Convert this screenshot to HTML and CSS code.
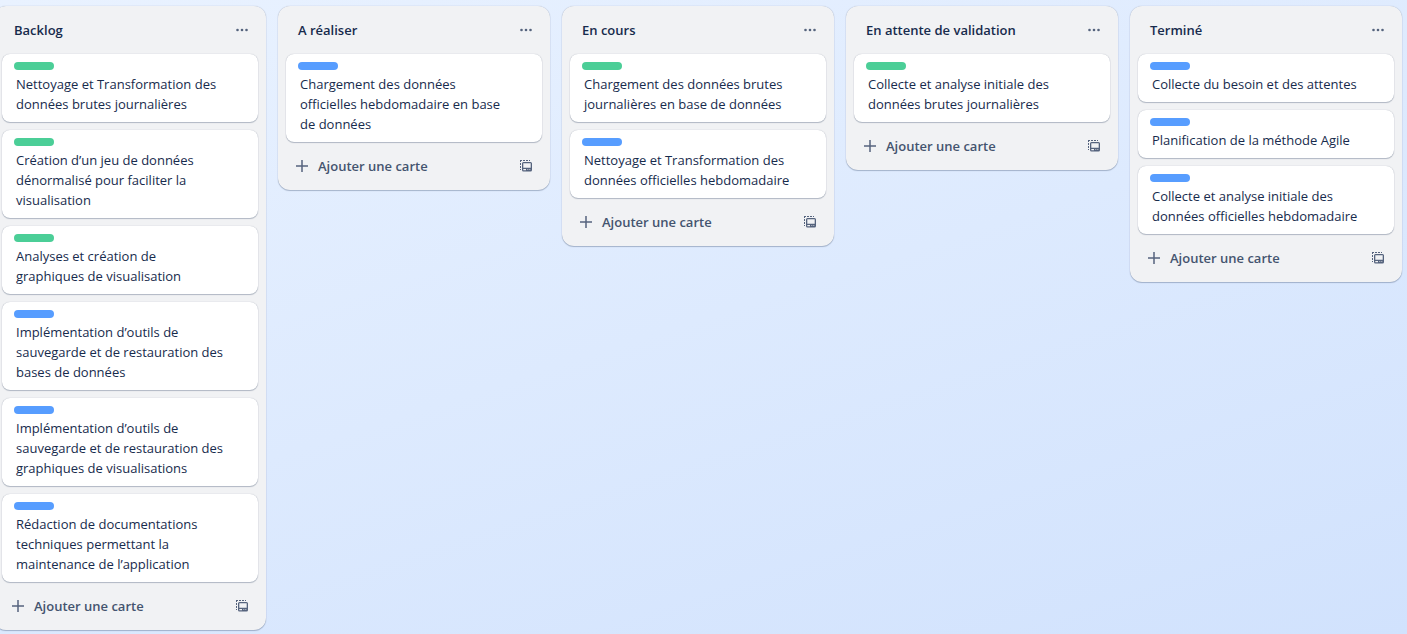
FILE: index.html
```html
<!DOCTYPE html>
<html lang="fr">
<head>
<meta charset="utf-8">
<title>Tableau</title>
<link rel="stylesheet" href="styles.css">
</head>
<body>
<svg class="sprite" aria-hidden="true">
  <symbol id="dots" viewBox="0 0 16 16"><circle cx="3.500" cy="8" r="1.300"/><circle cx="8" cy="8" r="1.300"/><circle cx="12.500" cy="8" r="1.300"/></symbol>
  <symbol id="plus" viewBox="0 0 16 16"><path d="M8 2v12M2 8h12" fill="none" stroke="currentColor" stroke-width="1.500"/></symbol>
  <symbol id="template" viewBox="0 0 16 16"><path d="M2 2h2v1H3v1H2zM5 2h2v1H5zM8 2h2v1H8zM11 2h1v1h-1zM2 5h1v2H2zM2 8h1v2H2zM2 11h1v1H2z"/><path fill-rule="evenodd" d="M5.500 4H12.500A1.500 1.500 0 0 1 14 5.500V12A1.500 1.500 0 0 1 12.500 13.500H5.500A1.500 1.500 0 0 1 4 12V5.500A1.500 1.500 0 0 1 5.500 4ZM5.300 5.300V9.800H12.700V5.300ZM5.300 11V12.200H8V11ZM9.500 11V12H10.200V11ZM11.500 11V12H12.200V11Z"/></symbol>
</svg>
<main class="board">
  <section class="list">
    <header class="list-header"><h2 class="list-title">Backlog</h2><button class="icon-button" aria-label="Actions de liste"><svg class="icon"><use href="#dots"/></svg></button></header>
    <ol class="cards">
      <li class="card"><span class="label green"></span><p class="card-text">Nettoyage et Transformation des données brutes journalières</p></li>
      <li class="card"><span class="label green"></span><p class="card-text">Création d’un jeu de données dénormalisé pour faciliter la visualisation</p></li>
      <li class="card"><span class="label green"></span><p class="card-text">Analyses et création de graphiques de visualisation</p></li>
      <li class="card"><span class="label blue"></span><p class="card-text">Implémentation d’outils de sauvegarde et de restauration des bases de données</p></li>
      <li class="card"><span class="label blue"></span><p class="card-text">Implémentation d’outils de sauvegarde et de restauration des graphiques de visualisations</p></li>
      <li class="card"><span class="label blue"></span><p class="card-text">Rédaction de documentations techniques permettant la maintenance de l’application</p></li>
    </ol>
    <footer class="list-footer"><button class="add-button"><svg class="icon"><use href="#plus"/></svg>Ajouter une carte</button><button class="icon-button" aria-label="Créer à partir d’un modèle"><svg class="icon"><use href="#template"/></svg></button></footer>
  </section>
  <section class="list">
    <header class="list-header"><h2 class="list-title">A réaliser</h2><button class="icon-button" aria-label="Actions de liste"><svg class="icon"><use href="#dots"/></svg></button></header>
    <ol class="cards">
      <li class="card"><span class="label blue"></span><p class="card-text">Chargement des données officielles hebdomadaire en base de données</p></li>
    </ol>
    <footer class="list-footer"><button class="add-button"><svg class="icon"><use href="#plus"/></svg>Ajouter une carte</button><button class="icon-button" aria-label="Créer à partir d’un modèle"><svg class="icon"><use href="#template"/></svg></button></footer>
  </section>
  <section class="list">
    <header class="list-header"><h2 class="list-title">En cours</h2><button class="icon-button" aria-label="Actions de liste"><svg class="icon"><use href="#dots"/></svg></button></header>
    <ol class="cards">
      <li class="card"><span class="label green"></span><p class="card-text">Chargement des données brutes journalières en base de données</p></li>
      <li class="card"><span class="label blue"></span><p class="card-text">Nettoyage et Transformation des données officielles hebdomadaire</p></li>
    </ol>
    <footer class="list-footer"><button class="add-button"><svg class="icon"><use href="#plus"/></svg>Ajouter une carte</button><button class="icon-button" aria-label="Créer à partir d’un modèle"><svg class="icon"><use href="#template"/></svg></button></footer>
  </section>
  <section class="list">
    <header class="list-header"><h2 class="list-title">En attente de validation</h2><button class="icon-button" aria-label="Actions de liste"><svg class="icon"><use href="#dots"/></svg></button></header>
    <ol class="cards">
      <li class="card"><span class="label green"></span><p class="card-text">Collecte et analyse initiale des données brutes journalières</p></li>
    </ol>
    <footer class="list-footer"><button class="add-button"><svg class="icon"><use href="#plus"/></svg>Ajouter une carte</button><button class="icon-button" aria-label="Créer à partir d’un modèle"><svg class="icon"><use href="#template"/></svg></button></footer>
  </section>
  <section class="list">
    <header class="list-header"><h2 class="list-title">Terminé</h2><button class="icon-button" aria-label="Actions de liste"><svg class="icon"><use href="#dots"/></svg></button></header>
    <ol class="cards">
      <li class="card"><span class="label blue"></span><p class="card-text">Collecte du besoin et des attentes</p></li>
      <li class="card"><span class="label blue"></span><p class="card-text">Planification de la méthode Agile</p></li>
      <li class="card"><span class="label blue"></span><p class="card-text">Collecte et analyse initiale des données officielles hebdomadaire</p></li>
    </ol>
    <footer class="list-footer"><button class="add-button"><svg class="icon"><use href="#plus"/></svg>Ajouter une carte</button><button class="icon-button" aria-label="Créer à partir d’un modèle"><svg class="icon"><use href="#template"/></svg></button></footer>
  </section>
</main>
</body>
</html>
```
FILE: styles.css
```css
* {
  box-sizing: border-box;
}

body {
  margin: 0;
  min-height: 100vh;
  overflow: hidden;
  background: linear-gradient(162deg, #e9f2ff, #d1e2fd);
  color: #172b4d;
  font-family: "Segoe UI", "Open Sans", "Noto Sans", sans-serif;
  font-size: 13px;
  line-height: 20px;
}

button {
  border: 0;
  background: none;
  color: #44546f;
  font: inherit;
  cursor: pointer;
}

.sprite {
  display: none;
}

/* The board is scrolled slightly to the right. */
.board {
  display: flex;
  align-items: flex-start;
  gap: 12px;
  margin-left: -6px;
  padding-top: 6px;
}

.list {
  flex: 0 0 272px;
  padding: 8px;
  border-radius: 12px;
  background: #f1f2f4;
  box-shadow: 0 1px 1px #091e4240, 0 0 1px #091e424f;
}

.list-header,
.list-footer {
  display: flex;
  align-items: center;
  justify-content: space-between;
}

.list-header {
  padding: 0 0 8px 12px;
}

.list-footer {
  padding-top: 8px;
}

.list-title {
  margin: 0;
  font-size: 13px;
  font-weight: 600;
}

.icon-button {
  display: grid;
  place-items: center;
  width: 32px;
  height: 32px;
  padding: 0;
}

.icon {
  width: 16px;
  height: 16px;
  color: #55637d;
  fill: currentColor;
}

.add-button {
  display: flex;
  flex: 1;
  align-items: center;
  gap: 8px;
  height: 32px;
  padding: 0 8px;
  font-weight: 600;
}

.cards {
  display: flex;
  flex-direction: column;
  gap: 8px;
  margin: 0;
  padding: 0;
  list-style: none;
}

.card {
  padding: 8px 12px;
  border-radius: 8px;
  background: #fff;
  box-shadow: 0 1px 1px #091e4240, 0 0 1px #091e424f;
}

.label {
  display: block;
  width: 40px;
  height: 8px;
  margin-bottom: 4px;
  border-radius: 4px;
}

.green {
  background: #4bce97;
}

.blue {
  background: #579dff;
}

.card-text {
  margin: 0;
  padding: 0 20px 0 2px;
}
```
